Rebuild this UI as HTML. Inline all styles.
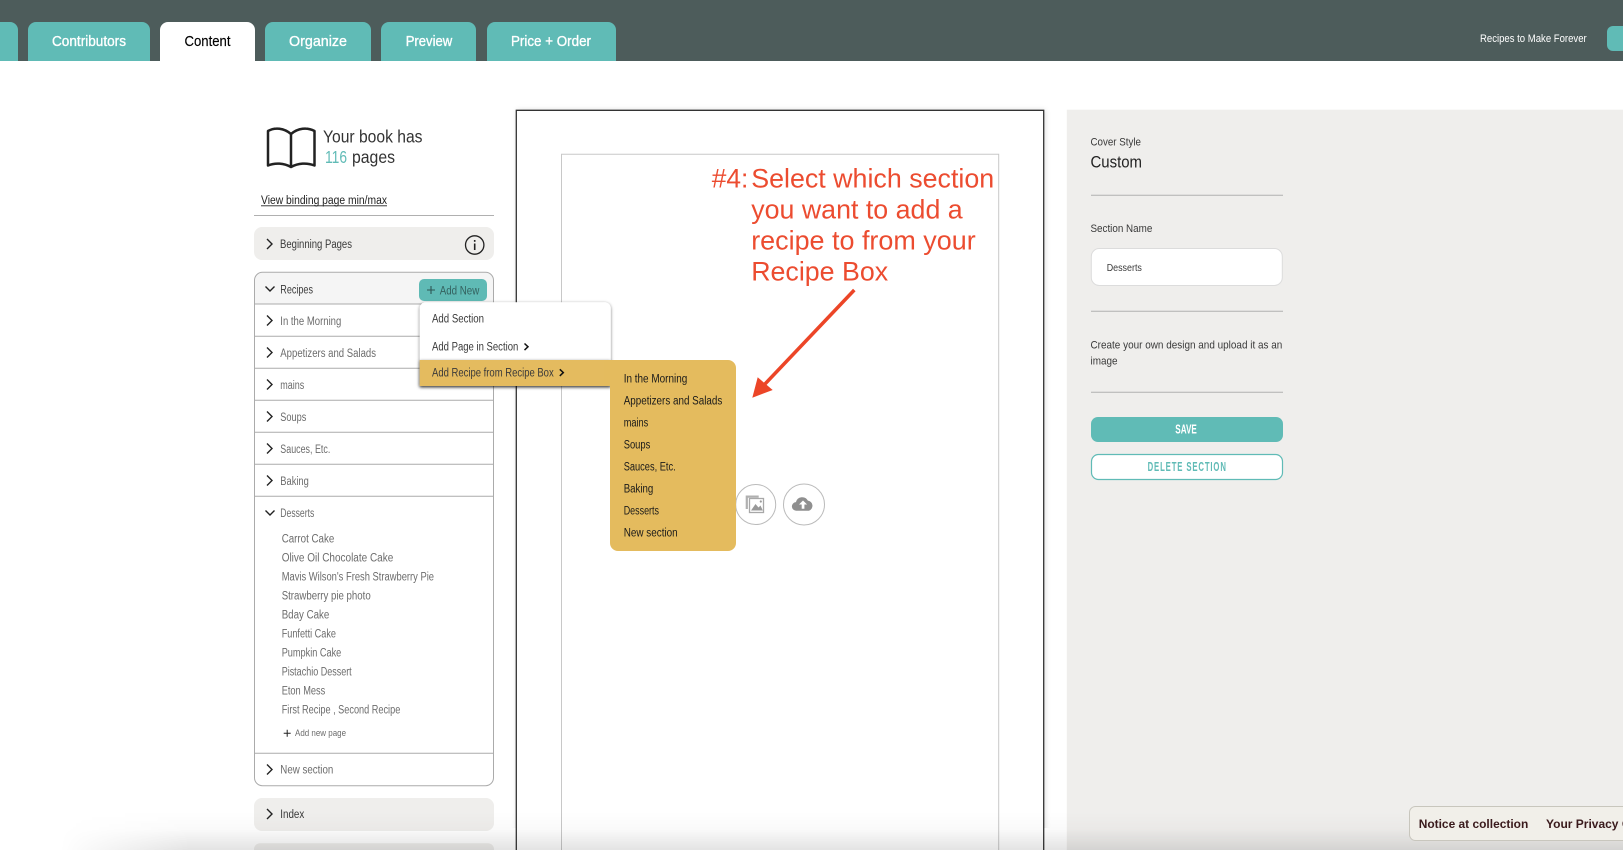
<!DOCTYPE html>
<html lang="en">
<head>
<meta charset="utf-8">
<title>Content</title>
<style>
html,body{margin:0;padding:0;width:1623px;height:850px;overflow:hidden;background:#fff}
#wrap{position:relative;width:1623px;height:850px;overflow:hidden}
svg{position:absolute;left:0;top:0;display:block;filter:blur(.3px)}
text{font-family:"Liberation Sans",Arial,sans-serif;font-size:11.5px;fill:#6c6c6c;white-space:pre}
.tab{font-size:15px;fill:#fff;stroke:#fff;stroke-width:.35px}
.dk{fill:#3a3a3a}
.sub{fill:#1a1a1a}
.rc{font-size:11.5px;fill:#6c6c6c}
.ann{font-size:27px;fill:#ec4c30}
.ln{stroke:#b0b0b0;stroke-width:1;fill:none}
.bd{stroke:#ababab;stroke-width:1;fill:none}
.ch{stroke:#222;stroke-width:1.4;fill:none}
</style>
</head>
<body>
<div id="wrap">
<svg width="1623" height="850" viewBox="0 0 1623 850" xmlns="http://www.w3.org/2000/svg">
<defs>
<filter id="ms" x="-10%" y="-10%" width="120%" height="130%"><feDropShadow dx="0" dy="1" stdDeviation="1.5" flood-color="#000" flood-opacity=".55"/></filter>
<filter id="ps" x="-3%" y="-3%" width="106%" height="100%"><feDropShadow dx="1" dy="0" stdDeviation="3" flood-color="#000" flood-opacity=".16"/></filter>
</defs>

<!-- top bar -->
<rect x="0" y="0" width="1623" height="61" fill="#4d5c5b"/>
<path d="M0 22h10a8 8 0 0 1 8 8v31H0z" fill="#60bbb6"/>
<path d="M28 61V30a8 8 0 0 1 8-8h106a8 8 0 0 1 8 8v31z" fill="#60bbb6"/>
<path d="M160 61V30a8 8 0 0 1 8-8h79a8 8 0 0 1 8 8v31z" fill="#fff"/>
<path d="M265 61V30a8 8 0 0 1 8-8h90a8 8 0 0 1 8 8v31z" fill="#60bbb6"/>
<path d="M381 61V30a8 8 0 0 1 8-8h79a8 8 0 0 1 8 8v31z" fill="#60bbb6"/>
<path d="M487 61V30a8 8 0 0 1 8-8h113a8 8 0 0 1 8 8v31z" fill="#60bbb6"/>
<text class="tab" x="52" y="46" textLength="74" lengthAdjust="spacingAndGlyphs">Contributors</text>
<text class="tab" x="184.5" y="46" textLength="46" lengthAdjust="spacingAndGlyphs" style="fill:#000;stroke:#000;stroke-width:.15px">Content</text>
<text class="tab" x="289" y="46" textLength="58" lengthAdjust="spacingAndGlyphs">Organize</text>
<text class="tab" x="405.7" y="46" textLength="46.5" lengthAdjust="spacingAndGlyphs">Preview</text>
<text class="tab" x="511" y="46" textLength="80" lengthAdjust="spacingAndGlyphs">Price + Order</text>
<text x="1480" y="42" textLength="106.7" lengthAdjust="spacingAndGlyphs" style="fill:#fff;font-size:11px">Recipes to Make Forever</text>
<path d="M1623 26h-10a6 6 0 0 0-6 6v13a6 6 0 0 0 6 6h10z" fill="#60bbb6"/>

<!-- book header -->
<path d="M291 134C284 128 275 127 268 131V165.500C275 162.500 284 163 291 167C298 163 307 162.500 314.500 165.500V131C307 127 298 128 291 134V166" fill="none" stroke="#222" stroke-width="2.500" stroke-linejoin="round"/>
<text x="323" y="142.700" textLength="99.500" lengthAdjust="spacingAndGlyphs" style="font-size:17.500px;fill:#333">Your book has</text>
<text x="325" y="163" textLength="22" lengthAdjust="spacingAndGlyphs" style="font-size:17.500px;fill:#60bbb6">116</text>
<text x="352" y="163" textLength="43" lengthAdjust="spacingAndGlyphs" style="font-size:17.500px;fill:#333">pages</text>
<text x="261" y="204" textLength="126" lengthAdjust="spacingAndGlyphs" style="font-size:11.500px;fill:#222">View binding page min/max</text>
<line x1="261" y1="205.800" x2="387" y2="205.800" stroke="#222" stroke-width=".9"/>
<line class="ln" x1="254" y1="215.500" x2="494" y2="215.500"/>

<!-- beginning pages -->
<rect x="254" y="227" width="240" height="33" rx="8" fill="#efeeec"/>
<path class="ch" d="M267 239l5 5-5 5"/>
<text class="dk" x="280" y="248" textLength="72" lengthAdjust="spacingAndGlyphs">Beginning Pages</text>
<circle cx="474.700" cy="245" r="9.200" fill="none" stroke="#222" stroke-width="1.300"/>
<rect x="473.900" y="243.500" width="1.600" height="6.500" fill="#222"/>
<rect x="473.900" y="240" width="1.600" height="1.800" fill="#222"/>

<!-- recipes list -->
<path d="M254.500 304V280a8 8 0 0 1 8-8h223a8 8 0 0 1 8 8v24z" fill="#f5f5f5"/>
<path class="bd" d="M262.500 272.300h223a8 8 0 0 1 8 8V777.700a8 8 0 0 1-8 8h-223a8 8 0 0 1-8-8V280.300a8 8 0 0 1 8-8z"/>
<line class="bd" x1="254.500" y1="304" x2="493.500" y2="304"/>
<line class="bd" x1="254.500" y1="336.300" x2="493.500" y2="336.300"/>
<line class="bd" x1="254.500" y1="368.300" x2="493.500" y2="368.300"/>
<line class="bd" x1="254.500" y1="400.300" x2="493.500" y2="400.300"/>
<line class="bd" x1="254.500" y1="432.300" x2="493.500" y2="432.300"/>
<line class="bd" x1="254.500" y1="464.300" x2="493.500" y2="464.300"/>
<line class="bd" x1="254.500" y1="496.300" x2="493.500" y2="496.300"/>
<line class="bd" x1="254.500" y1="753.300" x2="493.500" y2="753.300"/>

<path class="ch" d="M265.500 286.500l4.500 4.500 4.500-4.500"/>
<text class="dk" x="280.300" y="293.300" textLength="32.700" lengthAdjust="spacingAndGlyphs">Recipes</text>
<path class="ch" d="M267 315.500l5 5-5 5"/>
<text x="280.300" y="325" textLength="61" lengthAdjust="spacingAndGlyphs">In the Morning</text>
<path class="ch" d="M267 347.500l5 5-5 5"/>
<text x="280.300" y="357" textLength="95.700" lengthAdjust="spacingAndGlyphs">Appetizers and Salads</text>
<path class="ch" d="M267 379.500l5 5-5 5"/>
<text x="280.300" y="389" textLength="24" lengthAdjust="spacingAndGlyphs">mains</text>
<path class="ch" d="M267 411.500l5 5-5 5"/>
<text x="280.300" y="421" textLength="26" lengthAdjust="spacingAndGlyphs">Soups</text>
<path class="ch" d="M267 443.500l5 5-5 5"/>
<text x="280.300" y="453" textLength="50" lengthAdjust="spacingAndGlyphs">Sauces, Etc.</text>
<path class="ch" d="M267 475.500l5 5-5 5"/>
<text x="280.300" y="485" textLength="28.500" lengthAdjust="spacingAndGlyphs">Baking</text>
<path class="ch" d="M265.500 510.500l4.500 4.500 4.500-4.500"/>
<text x="280.300" y="517" textLength="34" lengthAdjust="spacingAndGlyphs">Desserts</text>

<text class="rc" x="281.700" y="542.300" textLength="52.600" lengthAdjust="spacingAndGlyphs">Carrot Cake</text>
<text class="rc" x="281.700" y="561.300" textLength="111.600" lengthAdjust="spacingAndGlyphs">Olive Oil Chocolate Cake</text>
<text class="rc" x="281.700" y="580.300" textLength="152.300" lengthAdjust="spacingAndGlyphs">Mavis Wilson's Fresh Strawberry Pie</text>
<text class="rc" x="281.700" y="599.300" textLength="89" lengthAdjust="spacingAndGlyphs">Strawberry pie photo</text>
<text class="rc" x="281.700" y="618.300" textLength="47.600" lengthAdjust="spacingAndGlyphs">Bday Cake</text>
<text class="rc" x="281.700" y="637.300" textLength="54.300" lengthAdjust="spacingAndGlyphs">Funfetti Cake</text>
<text class="rc" x="281.700" y="656.300" textLength="59.600" lengthAdjust="spacingAndGlyphs">Pumpkin Cake</text>
<text class="rc" x="281.700" y="675.300" textLength="70" lengthAdjust="spacingAndGlyphs">Pistachio Dessert</text>
<text class="rc" x="281.700" y="694.300" textLength="43.600" lengthAdjust="spacingAndGlyphs">Eton Mess</text>
<text class="rc" x="281.700" y="713.300" textLength="118.600" lengthAdjust="spacingAndGlyphs">First Recipe , Second Recipe</text>
<path d="M283.700 733.300h7M287.200 729.800v7" stroke="#222" stroke-width="1" fill="none"/>
<text x="295" y="736" textLength="51" lengthAdjust="spacingAndGlyphs" style="font-size:9px">Add new page</text>
<path class="ch" d="M267 764.500l5 5-5 5"/>
<text x="280.300" y="773.300" textLength="53" lengthAdjust="spacingAndGlyphs">New section</text>

<!-- index -->
<rect x="254" y="798" width="240" height="33" rx="8" fill="#efeeec"/>
<path class="ch" d="M267 809l5 5-5 5"/>
<text class="dk" x="280.300" y="818" textLength="24" lengthAdjust="spacingAndGlyphs">Index</text>
<path d="M254 850v-.7a6 6 0 0 1 6-6h228a6 6 0 0 1 6 6v.7z" fill="#efeeec"/>

<!-- book page -->
<path d="M516.300 850V110.300H1043.700V850z" fill="#fff" filter="url(#ps)"/>
<path d="M516.300 850V110.300H1043.700V850" fill="none" stroke="#333" stroke-width="1.300"/>
<path d="M561.500 850V154.300H998.700V850" fill="none" stroke="#c8c8c8" stroke-width="1"/>

<!-- annotation -->
<text class="ann" x="711.700" y="187.300" textLength="36.600" lengthAdjust="spacingAndGlyphs">#4:</text>
<text class="ann" x="751.200" y="187.300" textLength="243" lengthAdjust="spacingAndGlyphs">Select which section</text>
<text class="ann" x="751.200" y="218.300" textLength="211.500" lengthAdjust="spacingAndGlyphs">you want to add a</text>
<text class="ann" x="751.200" y="249.300" textLength="224.500" lengthAdjust="spacingAndGlyphs">recipe to from your</text>
<text class="ann" x="751.200" y="280.300" textLength="137" lengthAdjust="spacingAndGlyphs">Recipe Box</text>
<line x1="854.300" y1="290" x2="765" y2="384" stroke="#ec4527" stroke-width="3.500"/>
<path d="M752.300 397.700L757.700 377.300L772.700 390z" fill="#ec4527"/>

<!-- upload icons -->
<circle cx="755.700" cy="504.500" r="20" fill="#fff" stroke="#bbb" stroke-width="1"/>
<circle cx="804" cy="504.500" r="20.500" fill="#fff" stroke="#bbb" stroke-width="1"/>
<path d="M745.700 495.500h13v2.300h-10.800v11.200h-2.200z" fill="#b0b0b0"/>
<rect x="749.500" y="498.500" width="14" height="14" fill="#fff" stroke="#a8a8a8" stroke-width="1.300"/>
<path d="M751 510.500l4.500-6.500 3 3.500 2-2 2.300 5z" fill="#999"/>
<circle cx="760.800" cy="501.500" r="1.100" fill="#999"/>
<path d="M796.500 510.700a4.300 4.300 0 0 1-.6-8.600a6.500 6.500 0 0 1 12-1.500a5.200 5.200 0 0 1 1 10.100z" fill="#8f8f8f"/>
<path d="M803 500.500l-4 4h2.700v4.200h2.700v-4.200h2.700z" fill="#fff"/>

<!-- add new -->
<rect x="419" y="279" width="68" height="22" rx="5" fill="#5fbab5"/>
<path d="M427 290h8M431 286v8" stroke="#2e5654" stroke-width="1.100" fill="none"/>
<text x="439.700" y="294.300" textLength="39.600" lengthAdjust="spacingAndGlyphs" style="fill:#34615f">Add New</text>

<!-- menu -->
<g filter="url(#ms)">
<path d="M425.700 302.300h179a6 6 0 0 1 6 6V386h-191V308.300a6 6 0 0 1 6-6z" fill="#fff"/>
</g>
<rect x="419.700" y="360" width="191" height="26" fill="#e4bb5e" filter="url(#ms)"/>
<text class="dk" x="432" y="322.300" textLength="52" lengthAdjust="spacingAndGlyphs">Add Section</text>
<text class="dk" x="432" y="350.300" textLength="86.300" lengthAdjust="spacingAndGlyphs">Add Page in Section</text>
<path d="M524.500 343.500l3.500 3.300-3.500 3.300" fill="none" stroke="#111" stroke-width="1.500"/>
<text class="dk" x="432" y="376.300" textLength="121.700" lengthAdjust="spacingAndGlyphs">Add Recipe from Recipe Box</text>
<path d="M559.800 369.300l3.500 3.300-3.500 3.300" fill="none" stroke="#111" stroke-width="1.500"/>

<!-- submenu -->
<path d="M604 360H728a8 8 0 0 1 8 8V543a8 8 0 0 1-8 8H618a8 8 0 0 1-8-8V386h-6z" fill="#e4bb5e"/>
<text class="sub" x="623.700" y="382.300" textLength="63.600" lengthAdjust="spacingAndGlyphs">In the Morning</text>
<text class="sub" x="623.700" y="404.300" textLength="98.600" lengthAdjust="spacingAndGlyphs">Appetizers and Salads</text>
<text class="sub" x="623.700" y="426.300" textLength="24.600" lengthAdjust="spacingAndGlyphs">mains</text>
<text class="sub" x="623.700" y="448.300" textLength="26.600" lengthAdjust="spacingAndGlyphs">Soups</text>
<text class="sub" x="623.700" y="470.300" textLength="52" lengthAdjust="spacingAndGlyphs">Sauces, Etc.</text>
<text class="sub" x="623.700" y="492.300" textLength="29.600" lengthAdjust="spacingAndGlyphs">Baking</text>
<text class="sub" x="623.700" y="514.300" textLength="35.300" lengthAdjust="spacingAndGlyphs">Desserts</text>
<text class="sub" x="623.700" y="536.300" textLength="54" lengthAdjust="spacingAndGlyphs">New section</text>

<!-- right panel -->
<rect x="1066.800" y="109.700" width="556.200" height="740.300" fill="#efeeec"/>
<text class="dk" x="1090.500" y="145.700" textLength="50.500" lengthAdjust="spacingAndGlyphs" style="font-size:11px">Cover Style</text>
<text x="1090.500" y="167.300" textLength="51.500" lengthAdjust="spacingAndGlyphs" style="font-size:16.500px;fill:#222">Custom</text>
<line class="ln" x1="1091" y1="195.300" x2="1283" y2="195.300"/>
<text class="dk" x="1090.500" y="232" textLength="61.800" lengthAdjust="spacingAndGlyphs" style="font-size:11px">Section Name</text>
<rect x="1091.300" y="248.500" width="191" height="37" rx="8" fill="#fff" stroke="#dcdcdc" stroke-width="1"/>
<text class="dk" x="1106.700" y="271" textLength="35.200" lengthAdjust="spacingAndGlyphs" style="font-size:10.500px">Desserts</text>
<line class="ln" x1="1091" y1="311.300" x2="1283" y2="311.300"/>
<text class="dk" x="1090.500" y="348.300" textLength="191.800" lengthAdjust="spacingAndGlyphs" style="font-size:11px">Create your own design and upload it as an</text>
<text class="dk" x="1090.500" y="364.300" textLength="27" lengthAdjust="spacingAndGlyphs" style="font-size:11px">image</text>
<line class="ln" x1="1091" y1="392.300" x2="1283" y2="392.300"/>
<rect x="1091" y="417" width="192" height="25" rx="7" fill="#60bbb6"/>
<text x="1175.300" y="433.500" textLength="21.500" lengthAdjust="spacingAndGlyphs" style="font-size:12.500px;font-weight:bold;fill:#fff">SAVE</text>
<rect x="1091.500" y="454.500" width="191" height="25" rx="7" fill="#fff" stroke="#60bbb6" stroke-width="1.200"/>
<g transform="translate(1147.600 471) scale(.62 1)">
<text x="0" y="0" style="font-size:12.500px;font-weight:bold;fill:#60bbb6;letter-spacing:1.400px">DELETE SECTION</text>
</g>
</svg>

<svg width="1623" height="850" viewBox="0 0 1623 850" xmlns="http://www.w3.org/2000/svg" style="filter:none">
<defs>
<linearGradient id="vg" x1="0" y1="0" x2="0" y2="1">
<stop offset="0" stop-color="#000" stop-opacity="0"/>
<stop offset=".45" stop-color="#000" stop-opacity=".02"/>
<stop offset="1" stop-color="#000" stop-opacity=".11"/>
</linearGradient>
<linearGradient id="hg" x1="0" y1="0" x2="1" y2="0">
<stop offset="0" stop-color="#000"/>
<stop offset="1" stop-color="#fff"/>
</linearGradient>
<mask id="hm" maskUnits="userSpaceOnUse" x="0" y="810" width="1623" height="40">
<rect x="0" y="810" width="60" height="40" fill="#000"/>
<rect x="60" y="810" width="130" height="40" fill="url(#hg)"/>
<rect x="190" y="810" width="1433" height="40" fill="#fff"/>
</mask>
<clipPath id="nc"><rect x="1400" y="800" width="223" height="50"/></clipPath>
</defs>
<g mask="url(#hm)"><rect x="0" y="812" width="1623" height="38" fill="url(#vg)"/></g>
<path d="M1623 806.500H1415.500a6 6 0 0 0-6 6v22a6 6 0 0 0 6 6H1623" fill="#f1efe9" stroke="#c8c6bd" stroke-width="1"/>
<text x="1418.700" y="828" textLength="109.600" lengthAdjust="spacingAndGlyphs" style="font-size:12px;font-weight:bold;fill:#3a1a1c">Notice at collection</text>
<g clip-path="url(#nc)"><text x="1546" y="828" style="font-size:12px;font-weight:bold;fill:#3a1a1c">Your Privacy Choices</text></g>
</svg>
</div>
</body>
</html>
